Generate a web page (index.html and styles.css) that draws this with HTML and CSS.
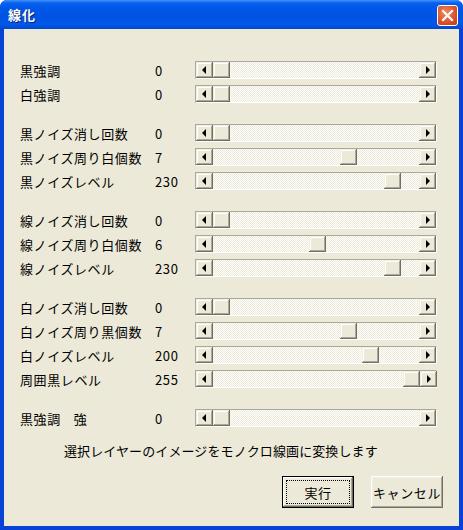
FILE: index.html
```html
<!DOCTYPE html>
<html lang="ja">
<head>
    <meta charset="UTF-8">
    <title>線化</title>
    <link rel="stylesheet" href="styles.css">
</head>
<body>
    <div class="window">
        <div class="titlebar">
            <span class="title">線化</span>
            <span class="close-btn">
                <svg width="13" height="13" viewBox="0 0 13 13">
                    <path d="M2 2 L11 11 M11 2 L2 11" stroke="#fff" stroke-width="2.2" stroke-linecap="square"/>
                </svg>
            </span>
        </div>
        <div class="content">
            <!-- 黒強調 -->
            <div class="group">
                <div class="row"><span class="label">黒強調</span><span class="value">0</span>
                    <div class="scroll"><span class="arrow left"></span><div class="track"><span class="thumb" style="margin-left:0px"></span></div><span class="arrow right"></span></div></div>
                <div class="row"><span class="label">白強調</span><span class="value">0</span>
                    <div class="scroll"><span class="arrow left"></span><div class="track"><span class="thumb" style="margin-left:0px"></span></div><span class="arrow right"></span></div></div>
            </div>
            <!-- 黒ノイズ -->
            <div class="group">
                <div class="row"><span class="label">黒ノイズ消し回数</span><span class="value">0</span>
                    <div class="scroll"><span class="arrow left"></span><div class="track"><span class="thumb" style="margin-left:0px"></span></div><span class="arrow right"></span></div></div>
                <div class="row"><span class="label">黒ノイズ周り白個数</span><span class="value">7</span>
                    <div class="scroll"><span class="arrow left"></span><div class="track"><span class="thumb" style="margin-left:127px"></span></div><span class="arrow right"></span></div></div>
                <div class="row"><span class="label">黒ノイズレベル</span><span class="value">230</span>
                    <div class="scroll"><span class="arrow left"></span><div class="track"><span class="thumb" style="margin-left:171px"></span></div><span class="arrow right"></span></div></div>
            </div>
            <!-- 線ノイズ -->
            <div class="group">
                <div class="row"><span class="label">線ノイズ消し回数</span><span class="value">0</span>
                    <div class="scroll"><span class="arrow left"></span><div class="track"><span class="thumb" style="margin-left:0px"></span></div><span class="arrow right"></span></div></div>
                <div class="row"><span class="label">線ノイズ周り白個数</span><span class="value">6</span>
                    <div class="scroll"><span class="arrow left"></span><div class="track"><span class="thumb" style="margin-left:96px"></span></div><span class="arrow right"></span></div></div>
                <div class="row"><span class="label">線ノイズレベル</span><span class="value">230</span>
                    <div class="scroll"><span class="arrow left"></span><div class="track"><span class="thumb" style="margin-left:171px"></span></div><span class="arrow right"></span></div></div>
            </div>
            <!-- 白ノイズ -->
            <div class="group">
                <div class="row"><span class="label">白ノイズ消し回数</span><span class="value">0</span>
                    <div class="scroll"><span class="arrow left"></span><div class="track"><span class="thumb" style="margin-left:0px"></span></div><span class="arrow right"></span></div></div>
                <div class="row"><span class="label">白ノイズ周り黒個数</span><span class="value">7</span>
                    <div class="scroll"><span class="arrow left"></span><div class="track"><span class="thumb" style="margin-left:127px"></span></div><span class="arrow right"></span></div></div>
                <div class="row"><span class="label">白ノイズレベル</span><span class="value">200</span>
                    <div class="scroll"><span class="arrow left"></span><div class="track"><span class="thumb" style="margin-left:149px"></span></div><span class="arrow right"></span></div></div>
                <div class="row"><span class="label">周囲黒レベル</span><span class="value">255</span>
                    <div class="scroll"><span class="arrow left"></span><div class="track"><span class="thumb" style="margin-left:190px"></span></div><span class="arrow right"></span></div></div>
            </div>
            <div class="group">
                <div class="row"><span class="label">黒強調<span class="gap">強</span></span><span class="value">0</span>
                    <div class="scroll"><span class="arrow left"></span><div class="track"><span class="thumb" style="margin-left:0px"></span></div><span class="arrow right"></span></div></div>
            </div>
            <p class="message">選択レイヤーのイメージをモノクロ線画に変換します</p>
            <div class="buttons">
                <button class="btn default"><span class="focus">実行</span></button>
                <button class="btn">キャンセル</button>
            </div>
        </div>
    </div>
</body>
</html>
```

FILE: styles.css
```css
body {
    margin: 0;
    padding: 0;
    font-family: "Noto Sans CJK JP", "Noto Sans", sans-serif;
    font-size: 13px;
    color: #000;
    background: #fff;
}

.window {
    width: 463px;
    height: 530px;
    box-sizing: border-box;
    display: flex;
    flex-direction: column;
    background: #0842d6;
    border-radius: 7px 7px 0 0;
    overflow: hidden;
}

.titlebar {
    height: 29px;
    flex: none;
    display: flex;
    align-items: center;
    justify-content: space-between;
    padding: 0 5px 0 8px;
    background: linear-gradient(#3d95ff 0, #0a5fee 3px, #0058e8 8px, #0053e3 16px, #0058ea 24px, #0049d0 29px);
}

.title {
    color: #fff;
    font-weight: bold;
    font-size: 13px;
    letter-spacing: 1px;
    text-shadow: 1px 1px #0a1e6e;
}

.close-btn {
    width: 19px;
    height: 19px;
    border: 1px solid #fff;
    border-radius: 3px;
    background: radial-gradient(circle at 40% 35%, #f08a63, #d9471e 70%, #c13a14);
    display: flex;
    align-items: center;
    justify-content: center;
    margin-top: 1px;
}

.content {
    flex: 1;
    margin: 0 4px 4px 4px;
    background: #ece9d8;
    padding: 29px 0 0 16px;
    letter-spacing: 0.6px;
}

.group {
    margin-bottom: 15px;
}

.row {
    display: flex;
    align-items: center;
    height: 24px;
}

.label {
    width: 135px;
    white-space: nowrap;
}

.gap {
    margin-left: 13px;
}

.value {
    width: 40px;
}

.scroll {
    width: 242px;
    height: 18px;
    box-sizing: border-box;
    display: flex;
    border-top: 1px solid #aca899;
    border-left: 1px solid #aca899;
    border-bottom: 1px solid #fff;
    border-right: 1px solid #fff;
}

.arrow,
.thumb {
    width: 17px;
    height: 16px;
    flex: none;
    box-sizing: border-box;
    background: #ece9d8;
    box-shadow: inset -1px -1px #716f64, inset 1px 1px #f1efe2, inset -2px -2px #aca899, inset 2px 2px #fff;
    display: flex;
    align-items: center;
    justify-content: center;
}

.arrow::after {
    content: "";
    border-top: 4px solid transparent;
    border-bottom: 4px solid transparent;
}

.arrow.left::after {
    border-right: 4px solid #000;
    margin-right: 1px;
}

.arrow.right::after {
    border-left: 4px solid #000;
    margin-left: 1px;
}

.track {
    flex: 1;
    display: flex;
    background-color: #ece9d8;
    background-image: conic-gradient(#fff 25%, #ece9d8 0 50%, #fff 0 75%, #ece9d8 0);
    background-size: 2px 2px;
}

.message {
    margin: -4px 0 0 44px;
    line-height: 20px;
    letter-spacing: 0.1px;
}

.buttons {
    display: flex;
    justify-content: flex-end;
    gap: 17px;
    margin: 15px 16px 0 0;
}

.btn {
    width: 72px;
    height: 32px;
    box-sizing: border-box;
    font-family: inherit;
    font-size: 13px;
    letter-spacing: 0.6px;
    padding: 0;
    border: none;
    background: #ece9d8;
    box-shadow: inset -1px -1px #716f64, inset 1px 1px #fff, inset -2px -2px #aca899, inset 2px 2px #f1efe2;
}

.btn.default {
    border: 1px solid #000;
    padding: 3px;
    display: flex;
}

.focus {
    flex: 1;
    display: flex;
    align-items: center;
    justify-content: center;
    border: 1px dotted #000;
}
```
